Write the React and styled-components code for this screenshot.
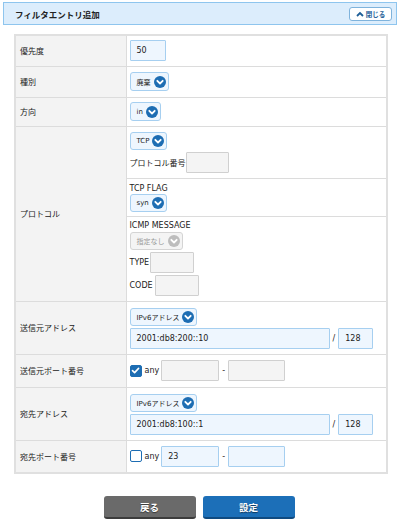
import React from 'react'
import styled, { createGlobalStyle } from 'styled-components'

const GlobalStyle = createGlobalStyle`
  body {
    margin: 0;
    background: #fff;
    font-family: "DejaVu Sans", "Noto Sans CJK JP", sans-serif;
    color: #222;
  }
`

const Page = styled.div`
  width: 400px;
  padding: 2px 3px 0 3px;
  box-sizing: border-box;
`

const Header = styled.div`
  height: 23px;
  box-sizing: border-box;
  border: 1px solid #8ec5ee;
  background: #dcedfc;
  display: flex;
  align-items: center;
  justify-content: space-between;
  padding: 0 4px 0 11px;
`

const Title = styled.h1`
  margin: 0;
  font-size: 8.5px;
  font-weight: bold;
  color: #222;
`

const CloseButton = styled.button`
  width: 43px;
  height: 14px;
  box-sizing: border-box;
  border: 1px solid #7fb3dc;
  border-radius: 3px;
  background: #fff;
  color: #1e5f98;
  font-family: inherit;
  font-size: 6.5px;
  font-weight: bold;
  display: flex;
  align-items: center;
  justify-content: center;
  gap: 2px;
  padding: 0;
`

const Table = styled.table`
  margin: 9px 9px 0 11px;
  width: 374px;
  border-collapse: collapse;
  border: 2px solid #e0e0e0;
  font-size: 8px;
`

const Label = styled.th`
  width: 111px;
  background: #f3f3f3;
  border: 1px solid #dcdcdc;
  text-align: left;
  font-weight: normal;
  color: #222;
  padding: 0 4px;
  height: ${p => p.$h || 30}px;
  box-sizing: border-box;
`

const Value = styled.td`
  border: 1px solid #dcdcdc;
  padding: ${p => (p.$flush ? '0' : '3px 3px')};
  vertical-align: middle;
`

const Sub = styled.div`
  padding: ${p => p.$pad || '5px 3px'};
  border-top: ${p => (p.$first ? 'none' : '1px solid #dcdcdc')};
  display: flex;
  flex-direction: column;
  align-items: flex-start;
  gap: ${p => p.$gap || 2}px;
`

const Line = styled.div`
  display: flex;
  align-items: center;
`

const Caption = styled.span`
  font-size: 8px;
  color: #222;
  margin-right: ${p => p.$mr || 0}px;
`

const Field = styled.div`
  width: ${p => p.$w}px;
  height: 21px;
  box-sizing: border-box;
  border: 1px solid ${p => (p.$off ? '#d0d0d0' : '#a6cff0')};
  background: ${p => (p.$off ? '#f4f4f4' : '#eef6fe')};
  border-radius: 1px;
  display: flex;
  align-items: center;
  padding-left: 6px;
  font-size: 8px;
  color: #222;
`

const Select = styled.div`
  display: inline-flex;
  align-items: center;
  gap: 3px;
  height: ${p => p.$h || 18}px;
  box-sizing: border-box;
  padding: 0 2px 0 6px;
  border: 1px solid ${p => (p.$off ? '#d4d4d4' : '#a6cff0')};
  background: ${p => (p.$off ? '#f4f4f4' : '#eef6fe')};
  border-radius: 3px;
  font-size: 7px;
  color: ${p => (p.$off ? '#999' : '#222')};
`

const Slash = styled.span`
  font-size: 8px;
  margin: 0 3px;
`

const Dash = styled.span`
  font-size: 8px;
  margin: 0 3px;
`

const Check = styled.span`
  width: 12px;
  height: 12px;
  box-sizing: border-box;
  border-radius: 2px;
  border: 1.5px solid #1d6db3;
  background: ${p => (p.$on ? '#1d6db3' : '#fff')};
  display: inline-flex;
  align-items: center;
  justify-content: center;
  margin-right: 3px;
`

const Actions = styled.div`
  display: flex;
  justify-content: center;
  gap: 7px;
  margin-top: 22px;
  padding-right: 2px;
`

const ActionButton = styled.button`
  width: 92px;
  height: 23px;
  border: none;
  border-radius: 3px;
  border-bottom: 2px solid ${p => (p.$primary ? '#0f4a80' : '#3c3c3c')};
  background: ${p => (p.$primary ? '#1c6fb8' : '#6a6a6a')};
  color: #fff;
  font-family: inherit;
  font-size: 9.5px;
  font-weight: bold;
  text-shadow: 0 1px 1px rgba(0, 0, 0, 0.5);
`

const Chevron = ({ off }) => (
  <svg width="12" height="12" viewBox="0 0 12 12">
    <circle cx="6" cy="6" r="6" fill={off ? '#bdbdbd' : '#1d6db3'} />
    <path d="M3.3 4.8 L6 7.5 L8.7 4.8" fill="none" stroke="#fff" strokeWidth="1.8" strokeLinecap="round" strokeLinejoin="round" />
  </svg>
)

const Dropdown = ({ children, off, h }) => (
  <Select $off={off} $h={h}>
    {children}
    <Chevron off={off} />
  </Select>
)

const Tick = () => (
  <svg width="9" height="9" viewBox="0 0 9 9">
    <path d="M1.5 4.6 L3.6 6.6 L7.6 2.4" fill="none" stroke="#fff" strokeWidth="1.6" strokeLinecap="round" strokeLinejoin="round" />
  </svg>
)

export default function App() {
  return (
    <Page>
      <GlobalStyle />
      <Header>
        <Title>フィルタエントリ追加</Title>
        <CloseButton>
          <svg width="8" height="6" viewBox="0 0 8 6">
            <path d="M1 5 L4 2 L7 5" fill="none" stroke="#1e5f98" strokeWidth="1.8" />
          </svg>
          閉じる
        </CloseButton>
      </Header>

      <Table>
        <tbody>
          <tr>
            <Label $h={31}>優先度</Label>
            <Value><Field $w={36}>50</Field></Value>
          </tr>
          <tr>
            <Label $h={31}>種別</Label>
            <Value><Dropdown h={19}>廃棄</Dropdown></Value>
          </tr>
          <tr>
            <Label $h={29}>方向</Label>
            <Value><Dropdown h={19}>in</Dropdown></Value>
          </tr>
          <tr>
            <Label>プロトコル</Label>
            <Value $flush>
              <Sub $first $pad="5px 3px 5px 3px">
                <Dropdown>TCP</Dropdown>
                <Line>
                  <Caption>プロトコル番号</Caption>
                  <Field $w={43} $off />
                </Line>
              </Sub>
              <Sub $pad="5px 3px 4px 3px" $gap={1}>
                <Caption>TCP FLAG</Caption>
                <Dropdown>syn</Dropdown>
              </Sub>
              <Sub $pad="4px 3px 5px 3px" $gap={2}>
                <Caption>ICMP MESSAGE</Caption>
                <Dropdown off>指定なし</Dropdown>
                <Line>
                  <Caption $mr={1}>TYPE</Caption>
                  <Field $w={44} $off />
                </Line>
                <Line>
                  <Caption $mr={2}>CODE</Caption>
                  <Field $w={44} $off />
                </Line>
              </Sub>
            </Value>
          </tr>
          <tr>
            <Label>送信元アドレス</Label>
            <Value>
              <Sub $first $pad="3px 0 2px 0" $gap={2}>
                <Dropdown>IPv6アドレス</Dropdown>
                <Line>
                  <Field $w={200}>2001:db8:200::10</Field>
                  <Slash>/</Slash>
                  <Field $w={35}>128</Field>
                </Line>
              </Sub>
            </Value>
          </tr>
          <tr>
            <Label $h={33}>送信元ポート番号</Label>
            <Value>
              <Line>
                <Check $on><Tick /></Check>
                <Caption $mr={2}>any</Caption>
                <Field $w={58} $off />
                <Dash>-</Dash>
                <Field $w={57} $off />
              </Line>
            </Value>
          </tr>
          <tr>
            <Label>宛先アドレス</Label>
            <Value>
              <Sub $first $pad="3px 0 2px 0" $gap={2}>
                <Dropdown>IPv6アドレス</Dropdown>
                <Line>
                  <Field $w={200}>2001:db8:100::1</Field>
                  <Slash>/</Slash>
                  <Field $w={35}>128</Field>
                </Line>
              </Sub>
            </Value>
          </tr>
          <tr>
            <Label $h={33}>宛先ポート番号</Label>
            <Value>
              <Line>
                <Check />
                <Caption $mr={2}>any</Caption>
                <Field $w={58}>23</Field>
                <Dash>-</Dash>
                <Field $w={57} />
              </Line>
            </Value>
          </tr>
        </tbody>
      </Table>

      <Actions>
        <ActionButton>戻る</ActionButton>
        <ActionButton $primary>設定</ActionButton>
      </Actions>
    </Page>
  )
}
